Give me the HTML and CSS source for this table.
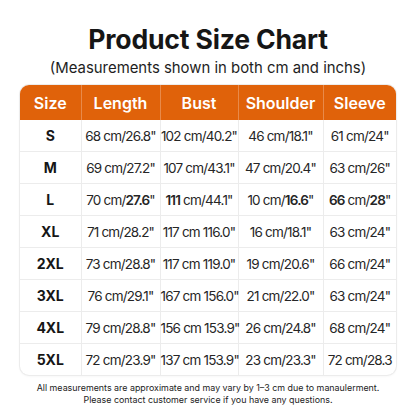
FILE: index.html
```html
<!DOCTYPE html>
<html>
<head>
<meta charset="utf-8">
<link rel="stylesheet" href="styles.css">
</head>
<body>
<div class="page">
  <h1 class="title">Product Size Chart</h1>
  <p class="subtitle">(Measurements shown in both cm and inchs)</p>
  <div class="chart">
    <table class="table">
      <colgroup>
        <col class="c1"><col class="c2"><col class="c3"><col class="c4"><col class="c5">
      </colgroup>
      <thead>
        <tr><th>Size</th><th>Length</th><th>Bust</th><th>Shoulder</th><th>Sleeve</th></tr>
      </thead>
      <tbody>
        <tr><td class="size">S</td><td>68 cm/26.8"</td><td>102 cm/40.2"</td><td>46 cm/18.1"</td><td>61 cm/24"</td></tr>
        <tr><td class="size">M</td><td>69 cm/27.2"</td><td>107 cm/43.1"</td><td>47 cm/20.4"</td><td>63 cm/26"</td></tr>
        <tr><td class="size">L</td><td>70 cm/<b>27.6</b>"</td><td><b>111</b> cm/44.1"</td><td>10 cm/<b>16.6</b>"</td><td><b>66</b> cm/<b>28</b>"</td></tr>
        <tr><td class="size">XL</td><td>71 cm/28.2"</td><td>117 cm 116.0"</td><td>16 cm/18.1"</td><td>63 cm/24"</td></tr>
        <tr><td class="size">2XL</td><td>73 cm/28.8"</td><td>117 cm 119.0"</td><td>19 cm/20.6"</td><td>66 cm/24"</td></tr>
        <tr><td class="size">3XL</td><td>76 cm/29.1"</td><td>167 cm 156.0"</td><td>21 cm/22.0"</td><td>63 cm/24"</td></tr>
        <tr><td class="size">4XL</td><td>79 cm/28.8"</td><td>156 cm 153.9"</td><td>26 cm/24.8"</td><td>68 cm/24"</td></tr>
        <tr><td class="size">5XL</td><td>72 cm/23.9"</td><td>137 cm 153.9"</td><td>23 cm/23.3"</td><td>72 cm/28.3</td></tr>
      </tbody>
    </table>
  </div>
  <p class="note">All measurements are approximate and may vary by 1–3 cm due to manaulerment.<br>Please contact customer service if you have any questions.</p>
</div>
</body>
</html>
```

FILE: styles.css
```css
html, body {
  margin: 0;
  padding: 0;
  background: #ffffff;
}
body {
  font-family: Inter, "Noto Sans", sans-serif;
  color: #1a1a1a;
}
.page {
  width: 416px;
  height: 416px;
  display: flex;
  flex-direction: column;
  align-items: center;
  padding-top: 22px;
  box-sizing: border-box;
}
.title {
  margin: 0;
  font-size: 26.6px;
  font-weight: 700;
  line-height: 34px;
  color: #161616;
  letter-spacing: -0.2px;
}
.subtitle {
  margin: 2px 0 0;
  font-size: 14.9px;
  line-height: 20px;
  color: #1e1e1e;
}
.chart {
  margin-top: 7px;
  width: 376px;
  border-radius: 9px;
  overflow: hidden;
  box-shadow: 0 0 0 1px #ececec, 0 1px 3px rgba(0,0,0,0.06);
}
.table {
  width: 100%;
  border-collapse: collapse;
  table-layout: fixed;
}
.c1 { width: 61px; }
.c2 { width: 79px; }
.c3 { width: 78px; }
.c4 { width: 85px; }
.c5 { width: 73px; }
th {
  background: #e0620a;
  color: #ffffff;
  font-size: 16px;
  font-weight: 600;
  height: 35px;
  padding: 0;
  border-left: 1px solid #e88a4a;
}
th:first-child { border-left: none; }
td {
  height: 31px;
  padding: 0;
  text-align: center;
  font-size: 13.5px;
  font-weight: 400;
  color: #262626;
  white-space: nowrap;
  letter-spacing: -0.8px;
  border-left: 1px solid #ececec;
  border-top: 1px solid #ececec;
}
td:first-child { border-left: none; }
tbody tr:first-child td { border-top: none; }
td b { font-weight: 600; }
td.size {
  font-weight: 700;
  font-size: 14px;
  letter-spacing: 0;
  color: #161616;
}
.note {
  margin: 7px 0 0;
  text-align: center;
  font-size: 8.9px;
  line-height: 12px;
  color: #222;
}
```
